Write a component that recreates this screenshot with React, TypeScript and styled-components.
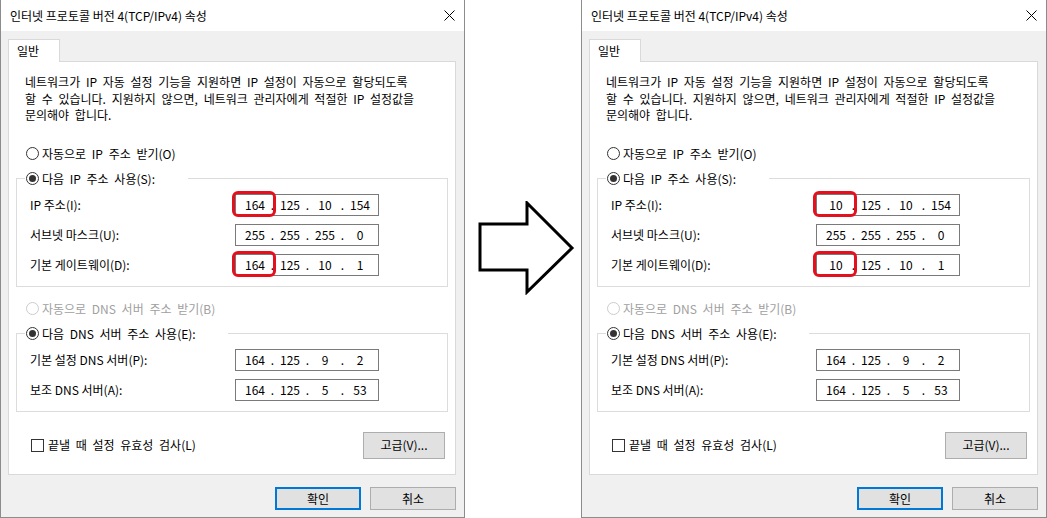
import styled, { createGlobalStyle } from "styled-components";

const GlobalStyle = createGlobalStyle`
  * { box-sizing: border-box; }
  html, body { margin: 0; padding: 0; background: #ffffff; }
  body {
    font-family: "Noto Sans CJK KR", "Noto Sans", sans-serif;
    font-size: 12px;
    color: #000000;
  }
`;

type Octets = [string, string, string, string];

function IpField({ value, mark }: { value: Octets; mark?: boolean }) {
  return (
    <IpBox>
      {value.map((v, i) => (
        <span key={i} style={{ display: "contents" }}>
          {i > 0 && <Dot>.</Dot>}
          <Octet>{v}</Octet>
        </span>
      ))}
      {mark && <Highlight />}
    </IpBox>
  );
}

function Radio({ children, checked, disabled }: { children: string; checked?: boolean; disabled?: boolean }) {
  return (
    <RadioRow $disabled={disabled}>
      <RadioCircle $checked={checked} $disabled={disabled} />
      <span>{children}</span>
    </RadioRow>
  );
}

function CloseIcon() {
  return (
    <svg width="11" height="11" viewBox="0 0 11 11">
      <path d="M0.5 0.5 L10.5 10.5 M10.5 0.5 L0.5 10.5" stroke="#000" strokeWidth="1" />
    </svg>
  );
}

function PropertiesDialog({ first, width }: { first: string; width: number }) {
  return (
    <Window $width={width}>
      <TitleBar>
        <span>인터넷 프로토콜 버전 4(TCP/IPv4) 속성</span>
        <CloseIcon />
      </TitleBar>

      <Body>
        <TabStrip>
          <Tab>일반</Tab>
        </TabStrip>

        <Panel>
          <Description>
            네트워크가 IP 자동 설정 기능을 지원하면 IP 설정이 자동으로 할당되도록
            <br />할 수 있습니다. 지원하지 않으면, 네트워크 관리자에게 적절한 IP 설정값을
            <br />문의해야 합니다.
          </Description>

          <TopRadio>
            <Radio>자동으로 IP 주소 받기(O)</Radio>
          </TopRadio>

          <Group>
            <Legend $width={163}>
              <Radio checked>다음 IP 주소 사용(S):</Radio>
            </Legend>
            <Rows>
              <FieldRow>
                <span>IP 주소(I):</span>
                <IpField value={[first, "125", "10", "154"]} mark />
              </FieldRow>
              <FieldRow>
                <span>서브넷 마스크(U):</span>
                <IpField value={["255", "255", "255", "0"]} />
              </FieldRow>
              <FieldRow>
                <span>기본 게이트웨이(D):</span>
                <IpField value={[first, "125", "10", "1"]} mark />
              </FieldRow>
            </Rows>
          </Group>

          <TopRadio $gap={14}>
            <Radio disabled>자동으로 DNS 서버 주소 받기(B)</Radio>
          </TopRadio>

          <Group>
            <Legend $width={203}>
              <Radio checked>다음 DNS 서버 주소 사용(E):</Radio>
            </Legend>
            <Rows>
              <FieldRow>
                <span>기본 설정 DNS 서버(P):</span>
                <IpField value={["164", "125", "9", "2"]} />
              </FieldRow>
              <FieldRow>
                <span>보조 DNS 서버(A):</span>
                <IpField value={["164", "125", "5", "53"]} />
              </FieldRow>
            </Rows>
          </Group>

          <BottomRow>
            <CheckRow>
              <CheckBox />
              <span>끝낼 때 설정 유효성 검사(L)</span>
            </CheckRow>
            <Button $w={82} $h={27}>고급(V)...</Button>
          </BottomRow>
        </Panel>

        <Footer>
          <Button $w={86} $h={23} $primary>확인</Button>
          <Button $w={86} $h={23}>취소</Button>
        </Footer>
      </Body>
    </Window>
  );
}

export default function App() {
  return (
    <>
      <GlobalStyle />
      <Page>
        <PropertiesDialog first="164" width={465} />
        <ArrowArea>
          <svg width="97" height="94" viewBox="0 0 97 94">
            <polygon
              points="2,23 49,23 49,2 94,47 49,91 49,69 2,69"
              fill="#ffffff"
              stroke="#000000"
              strokeWidth="3"
              strokeLinejoin="miter"
            />
          </svg>
        </ArrowArea>
        <PropertiesDialog first="10" width={466} />
      </Page>
    </>
  );
}

const Page = styled.div`
  display: flex;
  width: 1047px;
  height: 518px;
  overflow: hidden;
  background: #ffffff;
`;

const Window = styled.div<{ $width: number }>`
  width: ${(p) => p.$width}px;
  height: 518px;
  flex-shrink: 0;
  display: flex;
  flex-direction: column;
  background: #f0f0f0;
  border-left: 1px solid #8c8c8c;
  border-right: 1px solid #8c8c8c;
  border-bottom: 1px solid #8c8c8c;
`;

const TitleBar = styled.div`
  height: 31px;
  flex-shrink: 0;
  display: flex;
  align-items: center;
  justify-content: space-between;
  padding: 0 9px 0 9px;
  background: #ffffff;
  font-size: 12px;
  line-height: 16px;
`;

const Body = styled.div`
  flex: 1;
  display: flex;
  flex-direction: column;
  padding: 8px 8px 7px 7px;
  min-height: 0;
`;

const TabStrip = styled.div`
  display: flex;
`;

const Tab = styled.div`
  position: relative;
  z-index: 1;
  width: 52px;
  height: 23px;
  margin-bottom: -1px;
  padding-left: 8px;
  line-height: 21px;
  background: #ffffff;
  border: 1px solid #d9d9d9;
  border-bottom: none;
`;

const Panel = styled.div`
  flex: 1;
  display: flex;
  flex-direction: column;
  background: #ffffff;
  border: 1px solid #d9d9d9;
  min-height: 0;
`;

const Description = styled.div`
  margin: 12px 0 0 16px;
  line-height: 16.5px;
  word-spacing: 3px;
  white-space: nowrap;
`;

const TopRadio = styled.div<{ $gap?: number }>`
  margin: ${(p) => p.$gap ?? 22}px 0 0 17px;
`;

const RadioRow = styled.div<{ $disabled?: boolean }>`
  display: flex;
  align-items: center;
  gap: 3px;
  height: 16px;
  line-height: 16px;
  word-spacing: 3px;
  white-space: nowrap;
  color: ${(p) => (p.$disabled ? "#a0a0a0" : "#000000")};
`;

const RadioCircle = styled.span<{ $checked?: boolean; $disabled?: boolean }>`
  display: flex;
  align-items: center;
  justify-content: center;
  width: 13px;
  height: 13px;
  border-radius: 50%;
  background: #ffffff;
  border: 1px solid ${(p) => (p.$disabled ? "#cccccc" : "#333333")};

  &::after {
    content: "";
    width: 7px;
    height: 7px;
    border-radius: 50%;
    background: #333333;
    display: ${(p) => (p.$checked ? "block" : "none")};
  }
`;

const Group = styled.fieldset`
  margin: 9px 7px 0 7px;
  padding: 7px 0 10px 0;
  border: 1px solid #dcdcdc;
  min-width: 0;
`;

const Legend = styled.legend<{ $width: number }>`
  margin-left: 8px;
  padding: 0 0 0 1px;
  width: ${(p) => p.$width}px;
  height: 16px;
`;

const Rows = styled.div`
  display: flex;
  flex-direction: column;
  gap: 8px;
  padding-left: 13px;
`;

const FieldRow = styled.div`
  display: grid;
  grid-template-columns: 205px 144px;
  align-items: center;
  height: 22px;
  white-space: nowrap;
`;

const IpBox = styled.div`
  position: relative;
  display: flex;
  align-items: center;
  height: 22px;
  padding-left: 6px;
  border: 1px solid #7a7a7a;
  background: #ffffff;
  line-height: 20px;
`;

const Octet = styled.span`
  width: 26px;
  text-align: center;
`;

const Dot = styled.span`
  width: 9px;
  text-align: center;
`;

const Highlight = styled.span`
  position: absolute;
  left: -4px;
  top: -4px;
  width: 44px;
  height: 26px;
  border: 3px solid #e3111e;
  border-radius: 6px;
  pointer-events: none;
`;

const BottomRow = styled.div`
  display: flex;
  align-items: center;
  justify-content: space-between;
  margin-top: 20px;
  padding: 0 10px 0 22px;
  height: 27px;
`;

const CheckRow = styled.div`
  display: flex;
  align-items: center;
  gap: 4px;
  line-height: 16px;
  word-spacing: 3px;
  white-space: nowrap;
`;

const CheckBox = styled.span`
  width: 13px;
  height: 13px;
  border: 1px solid #333333;
  background: #ffffff;
`;

const Button = styled.div<{ $w: number; $h: number; $primary?: boolean }>`
  width: ${(p) => p.$w}px;
  height: ${(p) => p.$h}px;
  display: flex;
  align-items: center;
  justify-content: center;
  background: #e1e1e1;
  border: ${(p) => (p.$primary ? "2px solid #0078d7" : "1px solid #adadad")};
  line-height: 16px;
  white-space: nowrap;
`;

const Footer = styled.div`
  display: flex;
  justify-content: flex-end;
  gap: 9px;
  margin-top: 12px;
`;

const ArrowArea = styled.div`
  width: 116px;
  flex-shrink: 0;
  padding: 201px 0 0 13px;
`;
